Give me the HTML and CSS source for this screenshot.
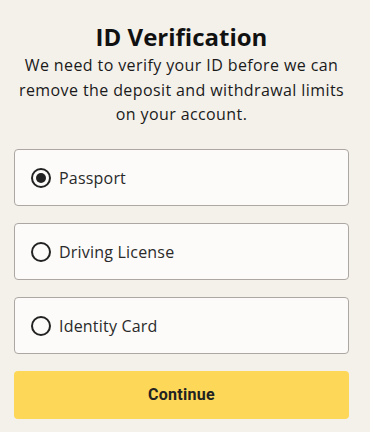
FILE: index.html
```html
<!DOCTYPE html>
<html lang="en">
<head>
<meta charset="utf-8">
<title>ID Verification</title>
<link rel="stylesheet" href="styles.css">
</head>
<body>
<main class="page">
  <h1 class="title">ID Verification</h1>
  <p class="lead">We need to verify your ID before we can remove the deposit and withdrawal limits on your account.</p>
  <div class="options">
    <label class="option">
      <span class="radio checked"></span>
      <span class="option-label">Passport</span>
    </label>
    <label class="option">
      <span class="radio"></span>
      <span class="option-label">Driving License</span>
    </label>
    <label class="option">
      <span class="radio"></span>
      <span class="option-label">Identity Card</span>
    </label>
  </div>
  <button class="continue" type="button">Continue</button>
</main>
</body>
</html>
```

FILE: styles.css
```css
html, body {
  margin: 0;
  padding: 0;
  background: #f4f1eb;
}
body {
  font-family: "Open Sans", "Noto Sans", sans-serif;
  color: #1f1f1f;
}
.page {
  padding: 21px 21px 0 14px;
  display: flex;
  flex-direction: column;
}
.title {
  margin: 0;
  text-align: center;
  font-size: 24px;
  line-height: 32px;
  font-weight: 700;
  color: #111;
}
.lead {
  margin: 0;
  text-align: center;
  font-size: 16px;
  line-height: 24.5px;
  letter-spacing: 0.4px;
  color: #1a1a1a;
}
.options {
  margin-top: 22px;
  display: flex;
  flex-direction: column;
  gap: 17px;
}
.option {
  height: 57px;
  box-sizing: border-box;
  border: 1px solid #aca7a2;
  border-radius: 4px;
  background: #fcfbf9;
  display: flex;
  align-items: center;
  padding: 2px 0 0 16px;
  gap: 8px;
}
.radio {
  width: 20px;
  height: 20px;
  box-sizing: border-box;
  border: 2px solid #222;
  border-radius: 50%;
  display: flex;
  align-items: center;
  justify-content: center;
}
.radio.checked::after {
  content: "";
  width: 10px;
  height: 10px;
  border-radius: 50%;
  background: #222;
}
.option-label {
  font-size: 16px;
  letter-spacing: 0.2px;
  color: #2a2a2a;
}
.continue {
  margin-top: 17px;
  height: 48px;
  border: 0;
  border-radius: 4px;
  background: #fdd757;
  font-family: Roboto, "Liberation Sans", sans-serif;
  font-weight: 700;
  font-size: 16px;
  letter-spacing: 0.3px;
  color: #222;
}
```
